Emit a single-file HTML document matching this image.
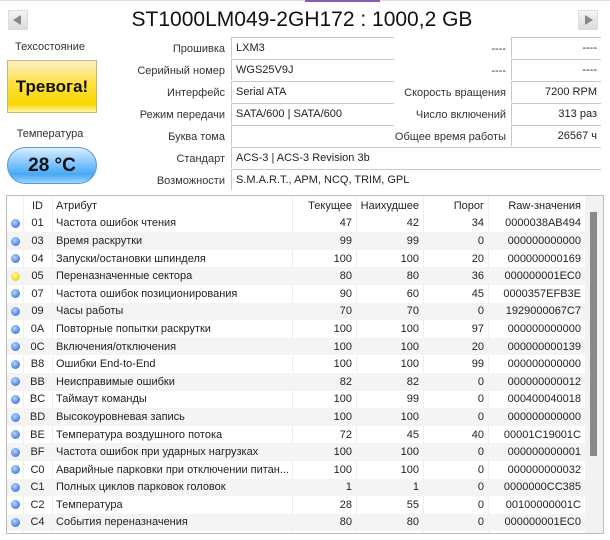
<!DOCTYPE html>
<html><head><meta charset="utf-8"><style>
*{box-sizing:border-box;margin:0;padding:0}
body{width:610px;height:540px;background:#fff;font-family:"Liberation Sans","DejaVu Sans",sans-serif;font-size:11px;color:#222;position:relative;overflow:hidden}
.a{position:absolute}
.lbl{position:absolute;text-align:right;white-space:nowrap;color:#333}
.box{position:absolute;border-top:1px solid #c8c8c8;border-left:1px solid #c8c8c8;height:21px;line-height:20px;padding:0 4px;white-space:nowrap}
.r{text-align:right}
table{border-collapse:collapse;table-layout:fixed}
td{height:17.6px;white-space:nowrap;overflow:hidden;padding:0 4px}
tr.g td{background:#f4f4f4}
.dot{display:inline-block;width:9px;height:9px;border-radius:50%;background:radial-gradient(circle at 40% 35%,#b8d4ff,#4a7fe0 70%,#2a5cc0);vertical-align:middle}
.y{background:radial-gradient(circle at 40% 35%,#fff6a0,#f0d820 70%,#c8b000)}
</style></head><body>
<div class="a" style="left:0;top:0;width:610px;height:1px;background:#ddd"></div>
<div class="a" style="left:305px;top:0;width:75px;height:2px;background:#8a5cb0"></div>
<div class="a" style="left:8px;top:10px;width:20px;height:20px;background:linear-gradient(#f4f4f4,#dcdcdc);border:1px solid #ddd"></div>
<div class="a" style="left:13px;top:15px;width:0;height:0;border-top:5px solid transparent;border-bottom:5px solid transparent;border-right:8px solid #888"></div>
<div class="a" style="left:578px;top:10px;width:20px;height:20px;background:linear-gradient(#f4f4f4,#dcdcdc);border:1px solid #ddd"></div>
<div class="a" style="left:585px;top:15px;width:0;height:0;border-top:5px solid transparent;border-bottom:5px solid transparent;border-left:8px solid #888"></div>
<div class="a" style="left:0;width:610px;top:8px;text-align:center;font-size:21px;color:#111;padding-right:6px">ST1000LM049-2GH172 : 1000,2 GB</div>

<div class="a" style="left:0;width:100px;top:41px;text-align:center;color:#333">Техсостояние</div>
<div class="a" style="left:7px;top:60px;width:90px;height:53px;border:1px solid #c8b870;background:linear-gradient(#fcf0c8,#ffe040 45%,#f8d800 85%,#fff6b0);text-align:center;line-height:51px;font-size:17px;font-weight:bold;color:#111">Тревога!</div>
<div class="a" style="left:0;width:100px;top:128px;text-align:center;color:#333">Температура</div>
<div class="a" style="left:7px;top:147px;width:90px;height:37px;border-radius:19px;border:1px solid #5a9ad8;background:linear-gradient(#d8eeff,#8cc8ff 40%,#48a8f4 75%,#9ad6ff);text-align:center;line-height:35px;font-size:19px;font-weight:bold;color:#111">28 °C</div>

<div class="lbl" style="right:385px;top:43px">Прошивка</div>
<div class="lbl" style="right:385px;top:65px">Серийный номер</div>
<div class="lbl" style="right:385px;top:87px">Интерфейс</div>
<div class="lbl" style="right:385px;top:109px">Режим передачи</div>
<div class="lbl" style="right:385px;top:131px">Буква тома</div>
<div class="lbl" style="right:385px;top:153px">Стандарт</div>
<div class="lbl" style="right:385px;top:175px">Возможности</div>
<div class="box" style="left:231px;top:37px;width:163px">LXM3</div>
<div class="box" style="left:231px;top:59px;width:163px">WGS25V9J</div>
<div class="box" style="left:231px;top:81px;width:163px">Serial ATA</div>
<div class="box" style="left:231px;top:103px;width:163px">SATA/600 | SATA/600</div>
<div class="box" style="left:231px;top:125px;width:163px"></div>
<div class="box" style="left:231px;top:147px;width:370px">ACS-3 | ACS-3 Revision 3b</div>
<div class="box" style="left:231px;top:169px;width:370px">S.M.A.R.T., APM, NCQ, TRIM, GPL</div>

<div class="lbl" style="right:104px;top:43px">----</div>
<div class="lbl" style="right:104px;top:65px">----</div>
<div class="lbl" style="right:104px;top:87px">Скорость вращения</div>
<div class="lbl" style="right:104px;top:109px">Число включений</div>
<div class="lbl" style="right:104px;top:131px">Общее время работы</div>
<div class="box r" style="left:511px;top:37px;width:90px">----</div>
<div class="box r" style="left:511px;top:59px;width:90px">----</div>
<div class="box r" style="left:511px;top:81px;width:90px">7200 RPM</div>
<div class="box r" style="left:511px;top:103px;width:90px">313 раз</div>
<div class="box r" style="left:511px;top:125px;width:90px">26567 ч</div>

<div class="a" style="left:6px;top:195px;width:598px;height:339px;border:1px solid #bbb;overflow:hidden">
<div class="a" style="left:16px;top:0;width:1px;height:337px;background:#eee"></div>
<div class="a" style="left:45px;top:0;width:1px;height:337px;background:#eee"></div>
<div class="a" style="left:285px;top:0;width:1px;height:337px;background:#eee"></div>
<div class="a" style="left:349px;top:0;width:1px;height:337px;background:#eee"></div>
<div class="a" style="left:416px;top:0;width:1px;height:337px;background:#eee"></div>
<div class="a" style="left:481px;top:0;width:1px;height:337px;background:#eee"></div>
<div class="a" style="left:578px;top:0;width:18px;height:337px;background:#f2f2f2"></div>
<div class="a" style="left:583px;top:16px;width:7px;height:244px;background:#8a8a8a"></div>
<table class="a" style="left:0;top:1px;width:578px">
<colgroup><col style="width:16px"><col style="width:29px"><col style="width:240px"><col style="width:64px"><col style="width:67px"><col style="width:65px"><col style="width:97px"></colgroup>
<tr><td></td><td style="text-align:center">ID</td><td>Атрибут</td><td class="r">Текущее</td><td class="r">Наихудшее</td><td class="r">Порог</td><td class="r">Raw-значения</td></tr>
<tr><td><span class="dot"></span></td><td style="text-align:center">01</td><td>Частота ошибок чтения</td><td class="r">47</td><td class="r">42</td><td class="r">34</td><td class="r">0000038AB494</td></tr>
<tr class="g"><td><span class="dot"></span></td><td style="text-align:center">03</td><td>Время раскрутки</td><td class="r">99</td><td class="r">99</td><td class="r">0</td><td class="r">000000000000</td></tr>
<tr><td><span class="dot"></span></td><td style="text-align:center">04</td><td>Запуски/остановки шпинделя</td><td class="r">100</td><td class="r">100</td><td class="r">20</td><td class="r">000000000169</td></tr>
<tr class="g"><td><span class="dot y"></span></td><td style="text-align:center">05</td><td>Переназначенные сектора</td><td class="r">80</td><td class="r">80</td><td class="r">36</td><td class="r">000000001EC0</td></tr>
<tr><td><span class="dot"></span></td><td style="text-align:center">07</td><td>Частота ошибок позиционирования</td><td class="r">90</td><td class="r">60</td><td class="r">45</td><td class="r">0000357EFB3E</td></tr>
<tr class="g"><td><span class="dot"></span></td><td style="text-align:center">09</td><td>Часы работы</td><td class="r">70</td><td class="r">70</td><td class="r">0</td><td class="r">1929000067C7</td></tr>
<tr><td><span class="dot"></span></td><td style="text-align:center">0A</td><td>Повторные попытки раскрутки</td><td class="r">100</td><td class="r">100</td><td class="r">97</td><td class="r">000000000000</td></tr>
<tr class="g"><td><span class="dot"></span></td><td style="text-align:center">0C</td><td>Включения/отключения</td><td class="r">100</td><td class="r">100</td><td class="r">20</td><td class="r">000000000139</td></tr>
<tr><td><span class="dot"></span></td><td style="text-align:center">B8</td><td>Ошибки End-to-End</td><td class="r">100</td><td class="r">100</td><td class="r">99</td><td class="r">000000000000</td></tr>
<tr class="g"><td><span class="dot"></span></td><td style="text-align:center">BB</td><td>Неисправимые ошибки</td><td class="r">82</td><td class="r">82</td><td class="r">0</td><td class="r">000000000012</td></tr>
<tr><td><span class="dot"></span></td><td style="text-align:center">BC</td><td>Таймаут команды</td><td class="r">100</td><td class="r">99</td><td class="r">0</td><td class="r">000400040018</td></tr>
<tr class="g"><td><span class="dot"></span></td><td style="text-align:center">BD</td><td>Высокоуровневая запись</td><td class="r">100</td><td class="r">100</td><td class="r">0</td><td class="r">000000000000</td></tr>
<tr><td><span class="dot"></span></td><td style="text-align:center">BE</td><td>Температура воздушного потока</td><td class="r">72</td><td class="r">45</td><td class="r">40</td><td class="r">00001C19001C</td></tr>
<tr class="g"><td><span class="dot"></span></td><td style="text-align:center">BF</td><td>Частота ошибок при ударных нагрузках</td><td class="r">100</td><td class="r">100</td><td class="r">0</td><td class="r">000000000001</td></tr>
<tr><td><span class="dot"></span></td><td style="text-align:center">C0</td><td>Аварийные парковки при отключении питан...</td><td class="r">100</td><td class="r">100</td><td class="r">0</td><td class="r">000000000032</td></tr>
<tr class="g"><td><span class="dot"></span></td><td style="text-align:center">C1</td><td>Полных циклов парковок головок</td><td class="r">1</td><td class="r">1</td><td class="r">0</td><td class="r">0000000CC385</td></tr>
<tr><td><span class="dot"></span></td><td style="text-align:center">C2</td><td>Температура</td><td class="r">28</td><td class="r">55</td><td class="r">0</td><td class="r">00100000001C</td></tr>
<tr class="g"><td><span class="dot"></span></td><td style="text-align:center">C4</td><td>События переназначения</td><td class="r">80</td><td class="r">80</td><td class="r">0</td><td class="r">000000001EC0</td></tr>
</table>
</div>
</body></html>
